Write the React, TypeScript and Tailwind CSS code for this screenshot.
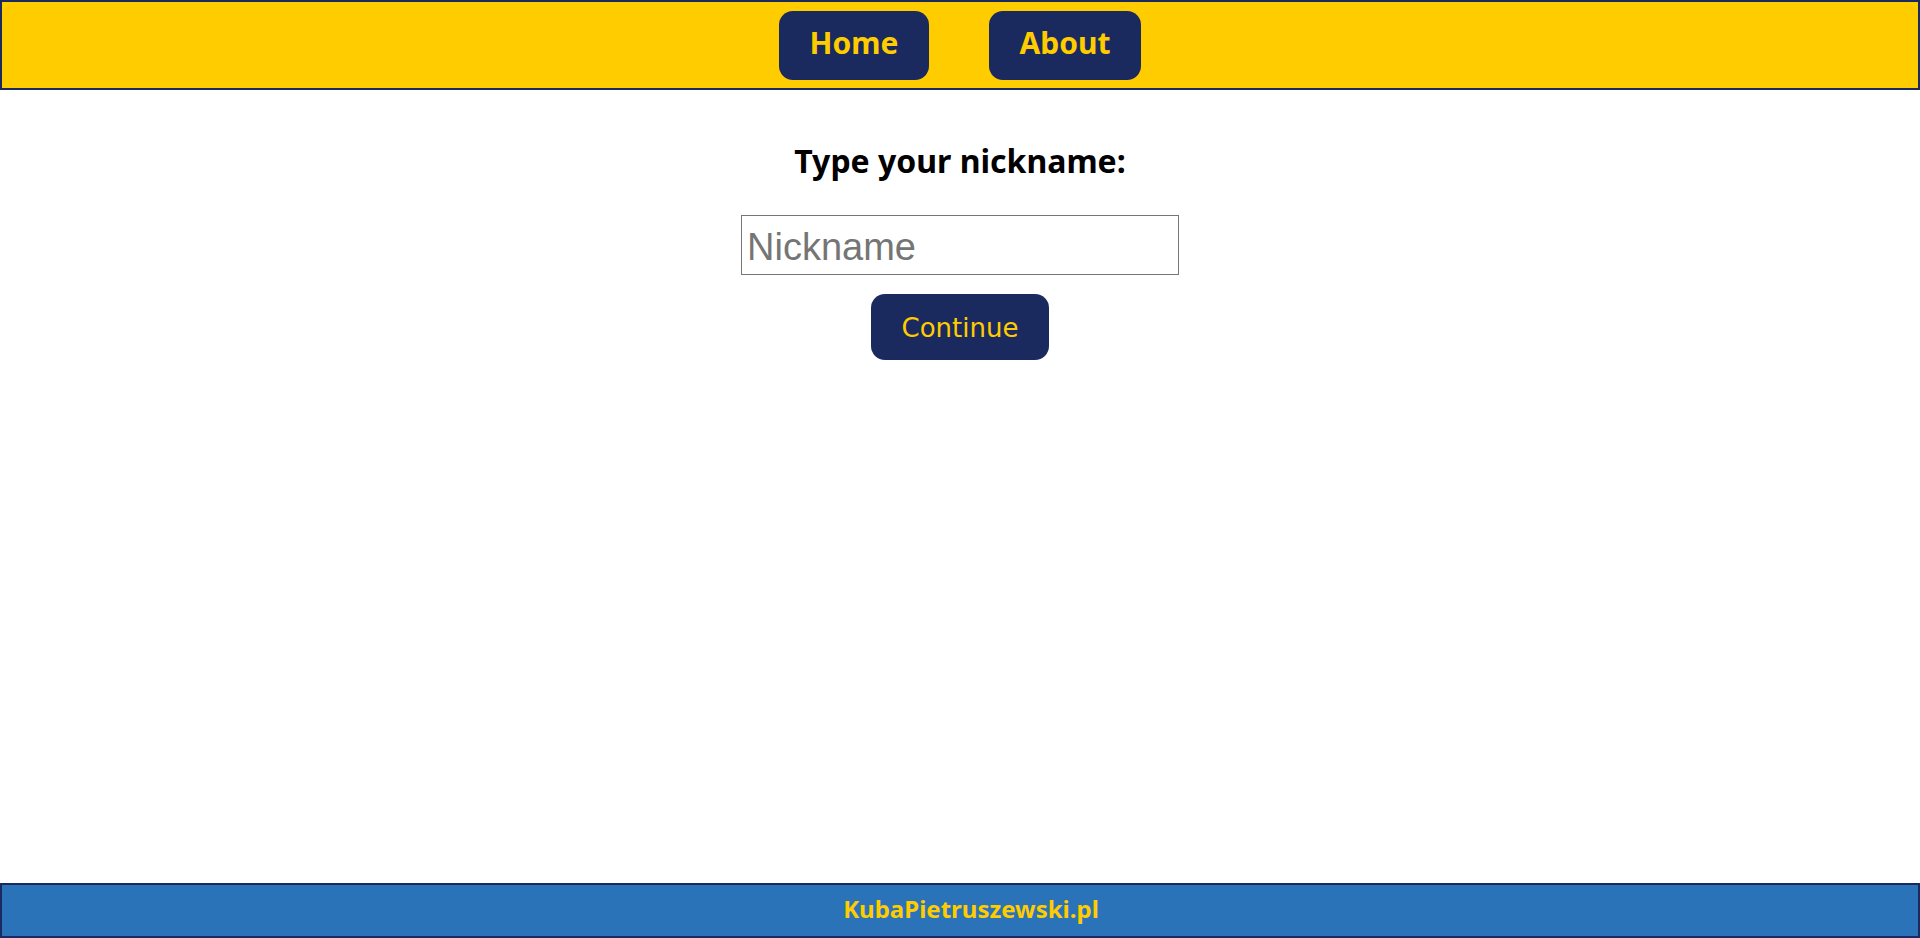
import { FC } from 'react';

const App: FC = () => {
    return (
        <div className="min-h-screen flex flex-col bg-white" style={{ fontFamily: '"Noto Sans", "Liberation Sans", sans-serif' }}>
            <header className="h-[90px] flex items-center justify-center gap-[60px] bg-[#ffcc00] border-2 border-[#1b2a5e]">
                <a className="w-[150px] h-[69px] flex items-center justify-center pb-[6px] rounded-[14px] bg-[#1b2a5e] text-[#ffcc00] text-[30px] font-bold">
                    Home
                </a>
                <a className="w-[152px] h-[69px] flex items-center justify-center pb-[6px] rounded-[14px] bg-[#1b2a5e] text-[#ffcc00] text-[30px] font-bold">
                    About
                </a>
            </header>
            <main className="flex-1 flex flex-col items-center pt-[55px]">
                <h1 className="text-[32px] font-bold text-black leading-none">Type your nickname:</h1>
                <input
                    type="text"
                    placeholder="Nickname"
                    className="mt-[38px] w-[438px] h-[60px] border border-[#767676] px-[5px] pt-[4px] text-[38px] placeholder:text-[#757575] outline-none"
                    style={{ fontFamily: '"Liberation Sans", sans-serif' }}
                />
                <button
                    className="mt-[19px] w-[178px] h-[66px] pt-[3px] rounded-[14px] bg-[#1b2a5e] text-[#ffcc00] text-[26px]"
                    style={{ fontFamily: '"DejaVu Sans", sans-serif' }}
                >
                    Continue
                </button>
            </main>
            <footer className="h-[55px] flex items-center justify-center pl-[22px] pb-[4px] bg-[#2a73b9] border-2 border-[#1b2a5e]">
                <span className="text-[#ffcc00] text-[24px] font-bold">KubaPietruszewski.pl</span>
            </footer>
        </div>
    )
}

export default App
